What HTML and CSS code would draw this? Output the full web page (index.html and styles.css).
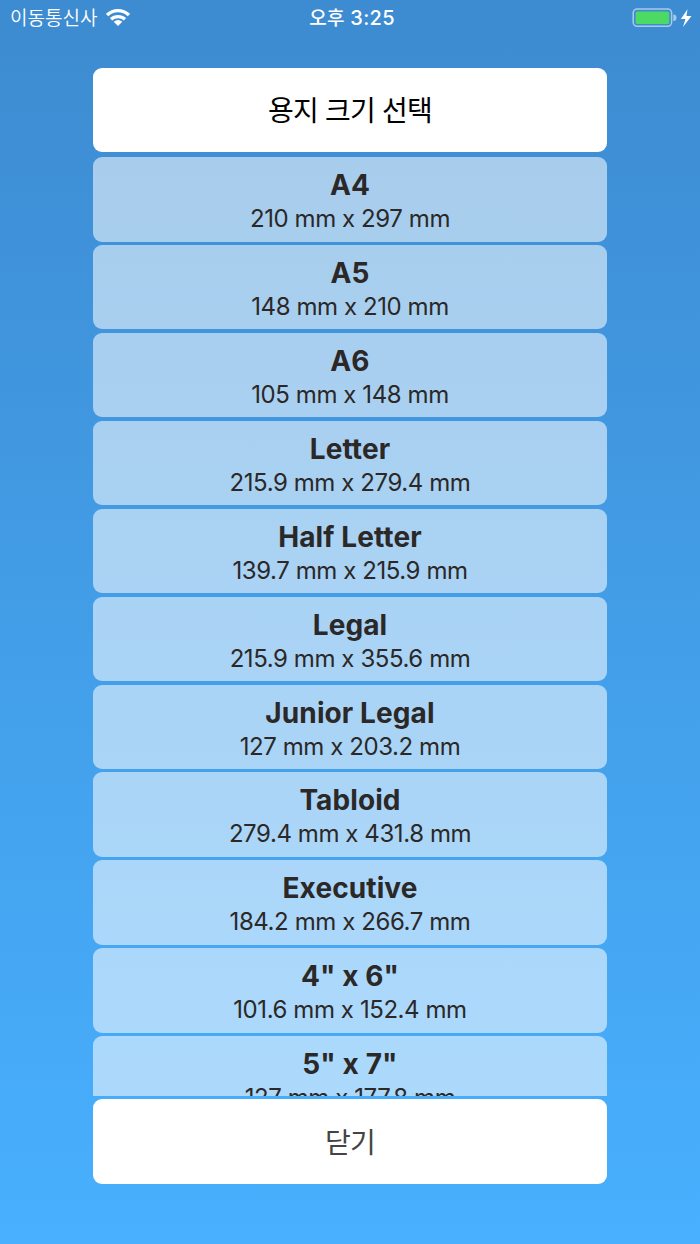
FILE: index.html
```html
<!DOCTYPE html>
<html lang="ko">
<head>
<meta charset="utf-8">
<title>용지 크기 선택</title>
<link rel="stylesheet" href="styles.css">
</head>
<body>
<div class="screen">
  <header class="status">
    <div class="carrier"><span class="carrier-name">이동통신사</span>
      <svg class="wifi" width="24" height="18" viewBox="0 0 24 18" fill="none" stroke="#fff" stroke-width="3.3"><path d="M1.1 6.1C7.2.2 16.8.2 22.9 6.1M5 10.3C9 6.6 15 6.6 19 10.3"/><path fill="#fff" stroke="none" d="M7.7 12.7Q12 9.2 16.3 12.7L12 17Z"/></svg>
    </div>
    <div class="time"><span class="meridiem">오후</span> 3:25</div>
    <div class="power">
      <svg width="60" height="22" viewBox="0 0 60 22"><rect x="1.2" y="1.9" width="38.4" height="17.4" rx="4" fill="none" stroke="#fff" stroke-opacity=".55" stroke-width="1.5"/><rect x="3.6" y="4.4" width="33.6" height="12.5" rx="1.6" fill="#4cd964"/><path d="M41.3 7.5a3.2 3.2 0 0 1 0 6.4z" fill="#fff" fill-opacity=".55"/><path d="M55.5 2.2 48.8 12.1H53.4L51 20 59.5 9.1H54.5Z" fill="#fff"/></svg>
    </div>
  </header>
  <main class="sheet">
    <h1 class="card heading">용지 크기 선택</h1>
    <div class="sizes">
      <div class="size"><b class="name">A4</b><span class="dims">210 mm x 297 mm</span></div>
      <div class="size"><b class="name">A5</b><span class="dims">148 mm x 210 mm</span></div>
      <div class="size"><b class="name">A6</b><span class="dims">105 mm x 148 mm</span></div>
      <div class="size"><b class="name">Letter</b><span class="dims">215.9 mm x 279.4 mm</span></div>
      <div class="size"><b class="name">Half Letter</b><span class="dims">139.7 mm x 215.9 mm</span></div>
      <div class="size"><b class="name">Legal</b><span class="dims">215.9 mm x 355.6 mm</span></div>
      <div class="size"><b class="name">Junior Legal</b><span class="dims">127 mm x 203.2 mm</span></div>
      <div class="size"><b class="name">Tabloid</b><span class="dims">279.4 mm x 431.8 mm</span></div>
      <div class="size"><b class="name">Executive</b><span class="dims">184.2 mm x 266.7 mm</span></div>
      <div class="size"><b class="name">4" x 6"</b><span class="dims">101.6 mm x 152.4 mm</span></div>
      <div class="size"><b class="name">5" x 7"</b><span class="dims">127 mm x 177.8 mm</span></div>
    </div>
    <button class="card close">닫기</button>
  </main>
</div>
</body>
</html>
```
FILE: styles.css
```css
* { box-sizing: border-box; }
body { margin: 0; font-family: Inter, "Noto Sans CJK KR", sans-serif; }
.screen {
  width: 700px;
  height: 1244px;
  overflow: hidden;
  background: linear-gradient(#3d8bd0, #48b0ff);
}
.status {
  display: grid;
  grid-template-columns: 1fr auto 1fr;
  align-items: center;
  height: 34px;
  padding: 0 8px 0 10px;
  color: #fff;
}
.carrier { display: flex; align-items: center; gap: 9px; }
.carrier-name { margin-top: -2px; font: 350 19px/34px "Noto Sans CJK KR", sans-serif; }
.time { padding-left: 2px; font-size: 20px; font-weight: 500; line-height: 34px; letter-spacing: .3px; }
.meridiem { font-family: "Noto Sans CJK KR", sans-serif; font-size: 19px; }
.power { display: flex; justify-content: flex-end; }
.sheet { width: 514px; margin: 33.8px auto 0; }
.card {
  display: flex;
  align-items: center;
  justify-content: center;
  width: 100%;
  height: 84.4px;
  margin: 0;
  padding: 0 0 2px;
  border: 0;
  border-radius: 9px;
  background: #fff;
  font: 400 28px/40px "Noto Sans CJK KR", sans-serif;
  letter-spacing: -.8px;
}
.heading { color: #000; }
.sizes {
  display: flex;
  flex-direction: column;
  gap: 3.5px;
  height: 938.8px;
  margin: 5px 0 3.4px;
  overflow: hidden;
}
.size {
  display: flex;
  flex: 0 0 84.4px;
  flex-direction: column;
  align-items: center;
  padding-top: 11px;
  border-radius: 9px;
  background: rgba(255, 255, 255, .55);
  color: #2b2827;
}
.name { font-size: 28px; font-weight: 700; line-height: 34px; letter-spacing: .1px; }
.dims { font-size: 24px; font-weight: 400; line-height: 34px; letter-spacing: -.42px; }
.close { color: #444; }
```
